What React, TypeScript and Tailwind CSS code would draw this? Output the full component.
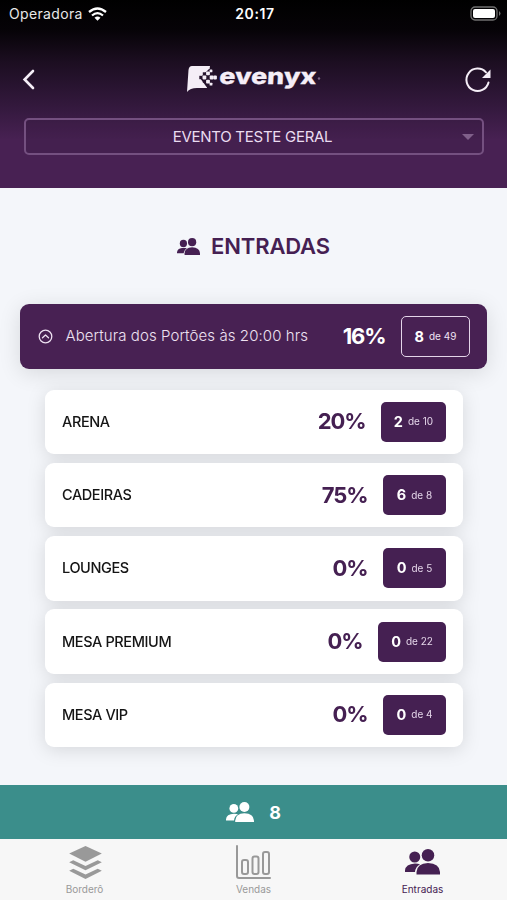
import React from "react";

type Entry = { name: string; percent: string; current: number; total: number; badge: string };

const entries: Entry[] = [
  { name: "ARENA", percent: "20%", current: 2, total: 10, badge: "w-[65px]" },
  { name: "CADEIRAS", percent: "75%", current: 6, total: 8, badge: "w-[63px]" },
  { name: "LOUNGES", percent: "0%", current: 0, total: 5, badge: "w-[63px]" },
  { name: "MESA PREMIUM", percent: "0%", current: 0, total: 22, badge: "w-[68px]" },
  { name: "MESA VIP", percent: "0%", current: 0, total: 4, badge: "w-[63px]" },
];

function PeopleIcon({ className }: { className: string }) {
  return (
    <svg className={className} viewBox="0 0 70 51" fill="currentColor">
      <circle cx="46" cy="12.500" r="12.500" />
      <path d="M23 51V46Q24 29 46 28Q69 29 70 46V51Z" />
      <circle cx="19.500" cy="16" r="11" />
      <path d="M0 46V43Q1 30 20 29Q26 29 30 30.500Q21 35.500 20 46Z" />
    </svg>
  );
}

function LayersIcon() {
  return (
    <svg className="h-[33px] w-[33px]" viewBox="0 0 96 97" fill="currentColor">
      <path d="M48 0L96 22L48 46L0 22Z" />
      <path d="M12 42L48 59L84 42L96 48L48 71L0 48Z" />
      <path d="M12 67L48 84L84 67L96 73L48 97L0 73Z" />
    </svg>
  );
}

function ChartIcon() {
  return (
    <svg className="h-[34px] w-[35px]" viewBox="0 0 35 34" fill="none" stroke="currentColor" strokeWidth="2" strokeLinecap="round" strokeLinejoin="round">
      <path d="M1 1V31Q1 33 3 33H34" />
      <rect x="6" y="15" width="6" height="14" rx="2" />
      <rect x="16.500" y="11.500" width="6" height="17.500" rx="2" />
      <rect x="27" y="7" width="6" height="22" rx="2" />
    </svg>
  );
}

function StatusBar() {
  return (
    <div className="flex h-[27px] items-center justify-between pr-[6px] pl-[9px] text-white">
      <div className="flex w-[110px] items-center gap-[5px]">
        <span className="text-[14px] tracking-[0.35px] text-[#e8e8e8]">Operadora</span>
        <svg className="h-[14px] w-[19px]" viewBox="0 0 19 14" fill="none" stroke="currentColor" strokeWidth="2.300">
          <path d="M1 5Q9.500-2 18 5M4 8.500Q9.500 3.800 15 8.500" />
          <path d="M6.500 10.700Q9.500 8.200 12.500 10.700L9.500 13.700Z" fill="currentColor" stroke="none" />
        </svg>
      </div>
      <span className="text-[14px] font-semibold tracking-[0.6px]">20:17</span>
      <div className="flex w-[110px] justify-end">
        <svg className="h-[15px] w-[31px]" viewBox="0 0 31 15">
          <rect x="1" y="1" width="26" height="13" rx="4" fill="none" stroke="#707070" strokeWidth="1.300" />
          <rect x="3" y="3" width="22" height="9" rx="2" fill="white" />
          <path d="M29 5Q32 7.500 29 10Z" fill="#707070" />
        </svg>
      </div>
    </div>
  );
}

function Logo() {
  return (
    <svg className="mr-[3px] h-[34px] w-[145px]" viewBox="0 0 145 34">
      <path d="M8 3H26L23 25H13Q6 25 3 29L4.500 7Q5 3 8 3Z" fill="#f5eef7" />
      <path d="M25 6H28V26H24L16 15Z" fill="#25132c" />
      <g transform="translate(24 14.500)">
        <g fill="#25132c">
          <rect x="-8.700" y="-1.700" width="3.400" height="3.400" />
          <rect x="-5.200" y="-5.200" width="3.400" height="3.400" />
          <rect x="-5.200" y="1.800" width="3.400" height="3.400" />
        </g>
        <g fill="#f5eef7">
          <rect x="-1.900" y="-6" width="3.800" height="3.800" rx=".8" />
          <rect x="-5.500" y="-1.900" width="3.800" height="3.800" rx=".8" />
          <rect x="1.700" y="-1.900" width="3.800" height="3.800" rx=".8" />
          <rect x="-1.900" y="2.200" width="3.800" height="3.800" rx=".8" />
          <rect x="5.300" y="-1.900" width="3.600" height="3.800" rx="1" />
          <rect x="1.600" y="-8" width="2.800" height="2.800" rx=".6" />
          <rect x="1.600" y="5.200" width="2.800" height="2.800" rx=".6" />
        </g>
      </g>
      <text x="0" y="0" transform="translate(35 20.800) skewX(-3)" textLength="97" lengthAdjust="spacingAndGlyphs" fill="#f5eef7" stroke="#f5eef7" strokeWidth=".3" fontFamily="Inter, sans-serif" fontSize="22" fontWeight="800">evenyx</text>
      <circle cx="135" cy="15.500" r="1.200" fill="#7e6685" />
    </svg>
  );
}

function Header() {
  return (
    <header className="flex h-[188px] flex-col bg-[linear-gradient(to_bottom,#000_0px,#060307_30px,#1c0e21_62px,#34193e_108px,#482153_140px,#482153_188px)]">
      <StatusBar />
      <div className="flex h-[91px] items-center justify-between pt-[14px] pr-[14px] pl-[22px] text-[#f5eef7]">
        <svg className="h-[22px] w-[30px]" viewBox="0 0 30 22" fill="none" stroke="currentColor" strokeWidth="2.600" strokeLinecap="round">
          <path d="M11 2L2.600 10.500L11 19" />
        </svg>
        <Logo />
        <svg className="h-[30px] w-[30px]" viewBox="0 0 30 30" fill="none" stroke="currentColor" strokeWidth="2">
          <path d="M25.500 17.500A11.200 11.200 0 1 1 23 7.300" strokeLinecap="round" />
          <path d="M27.500 4.500V13H19Z" fill="currentColor" stroke="none" />
        </svg>
      </div>
      <div className="mr-[23px] ml-6 flex h-[37px] items-center justify-center rounded-[5px] border-2 border-[#745080] bg-[#3b1d47]/30">
        <span className="flex-1 pt-px pl-[17px] text-center text-[15px] tracking-[-0.27px] text-[#eadcf0]">EVENTO TESTE GERAL</span>
        <svg className="mr-[8px] h-[6px] w-[12px]" viewBox="0 0 12 6"><path d="M0 0H12L6 6Z" fill="#80608a" /></svg>
      </div>
    </header>
  );
}

function EntryCard({ entry }: { entry: Entry }) {
  return (
    <div className="flex h-[64.500px] items-center rounded-[9px] bg-white px-[17px]">
      <span className="flex-1 text-[14.500px] font-medium tracking-[-0.4px] text-[#151515]">{entry.name}</span>
      <span className="mr-[15.500px] text-[22px] font-bold tracking-[-1.100px] text-[#452052]">{entry.percent}</span>
      <div className={"flex h-10 items-center justify-center gap-[5px] rounded-[5px] bg-[#452052] text-[#e4d5e9] " + entry.badge}>
        <b className="text-[14.500px] text-white">{entry.current}</b>
        <span className="text-[10px]">de {entry.total}</span>
      </div>
    </div>
  );
}

export default function App() {
  return (
    <div className="flex h-[900px] w-[507px] flex-col overflow-hidden bg-[#f4f6fa] font-['Inter',sans-serif]">
      <Header />
      <main className="h-[597px] pt-[40px]">
        <h1 className="flex h-9 items-center justify-center gap-[11px] text-[22px] font-semibold tracking-[-0.150px] text-[#452052]">
          <PeopleIcon className="h-[17px] w-[23px]" />
          ENTRADAS
        </h1>
        <section className="mx-5 mt-[40px] flex h-[65px] items-center rounded-[9px] bg-[#482153] pr-[17px] pl-[18px] text-[#eee2f2] shadow-[0_4px_22px_rgba(0,0,0,0.12)]">
          <svg className="h-[15px] w-[15px]" viewBox="0 0 15 15" fill="none" stroke="currentColor" strokeWidth="1.300" strokeLinecap="round" strokeLinejoin="round">
            <circle cx="7.500" cy="7.500" r="6.300" />
            <path d="M4.500 8.700L7.500 5.900L10.500 8.700" />
          </svg>
          <span className="ml-[12.500px] flex-1 text-[15px] font-light tracking-[0.080px]">Abertura dos Portões às 20:00 hrs</span>
          <span className="mr-[15.500px] text-[22px] font-bold tracking-[-1.100px] text-white">16%</span>
          <div className="flex h-[41px] w-[69px] items-center justify-center gap-[5px] rounded-[5px] border-[1.500px] border-[#e4d5e9]">
            <b className="text-[14.500px] text-white">8</b>
            <span className="text-[10px]">de 49</span>
          </div>
        </section>
        <div className="mt-[20.500px] mr-11 ml-[45px] flex flex-col gap-[8.800px] [filter:drop-shadow(0_3px_9px_rgba(0,0,0,0.12))]">
          {entries.map((entry) => <EntryCard key={entry.name} entry={entry} />)}
        </div>
      </main>
      <div className="flex h-[54px] items-center justify-center gap-[15px] bg-[#3b8e8b] text-[18px] font-bold text-white">
        <PeopleIcon className="h-[20.500px] w-[28px]" />
        8
      </div>
      <nav className="grid h-[61px] grid-cols-3 bg-[#f7f7f7] text-[10px] text-[#999]">
        <div className="flex flex-col items-center pt-[5px]"><div className="flex h-[36px] items-center pl-px"><LayersIcon /></div><span className="mt-[2px]">Borderô</span></div>
        <div className="flex flex-col items-center pt-[5px]"><div className="flex h-[36px] items-center"><ChartIcon /></div><span className="mt-[2px]">Vendas</span></div>
        <div className="flex flex-col items-center pt-[5px] text-[#452052]"><div className="flex h-[36px] items-center"><PeopleIcon className="h-[25.500px] w-[35px]" /></div><span className="mt-[2px]">Entradas</span></div>
      </nav>
    </div>
  );
}
